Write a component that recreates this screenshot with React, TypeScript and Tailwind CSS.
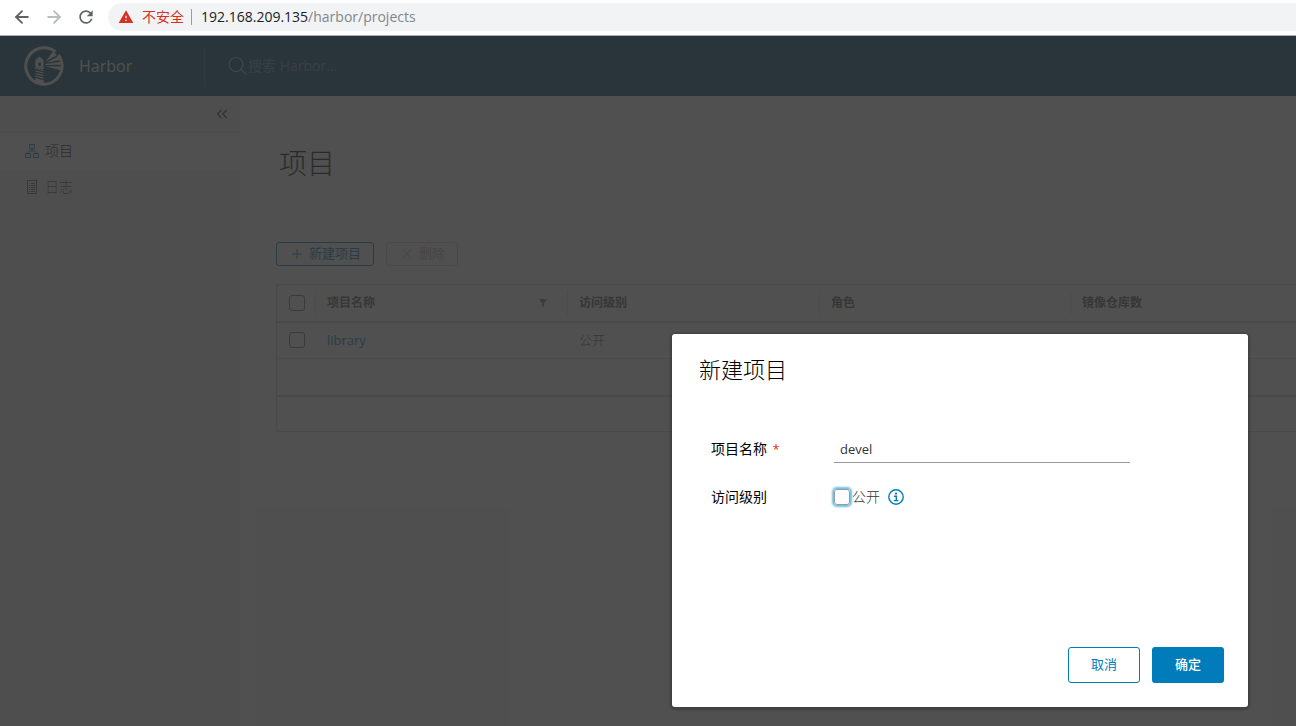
import type { ReactNode } from "react";
import { ArrowLeft, ArrowRight, ChevronsLeft, Plus, X } from "lucide-react";
import { MdRefresh, MdWarning } from "react-icons/md";

const columns = ["访问级别", "角色", "镜像仓库数"];

function BrowserBar() {
  return (
    <div className="flex h-9 shrink-0 items-center border-b border-[#a9acb0] bg-white pb-px font-['Open_Sans','Noto_Sans_CJK_SC',sans-serif]">
      <div className="flex w-[108px] shrink-0 items-center gap-3 pl-3">
        <button type="button" aria-label="后退">
          <ArrowLeft className="size-5 text-[#5f6368]" strokeWidth={2.25} />
        </button>
        <button type="button" aria-label="前进">
          <ArrowRight className="size-5 text-[#babcbe]" strokeWidth={2.25} />
        </button>
        <button type="button" aria-label="刷新">
          <MdRefresh className="size-5 text-[#5f6368]" />
        </button>
      </div>
      <div className="flex h-7 grow items-center rounded-l-full bg-[#f1f3f4] pl-[10px] text-sm">
        <MdWarning className="size-4 text-[#d93025]" />
        <span className="ml-2 text-[#d93025]">不安全</span>
        <span className="mr-[9px] ml-[7px] h-4 w-px bg-[#9a9da1]" />
        <span className="text-[#202124]">192.168.209.135</span>
        <span className="text-[#80868b]">/harbor/projects</span>
      </div>
    </div>
  );
}

function HarborLogo() {
  return (
    <svg viewBox="0 0 40 40" className="size-10 text-white" fill="currentColor" aria-hidden="true">
      <path
        fill="none"
        stroke="currentColor"
        strokeWidth="3"
        d="M18 38.200A18.300 18.300 0 1 1 31.500 5.700M34.500 9A18.300 18.300 0 0 1 18 38.200"
      />
      <path d="M15.500 10.500l4 3.500h-8z" />
      <path fillRule="evenodd" d="M11.500 14h8v7.500h-8zM14.300 16.500v3.500h2.600v-3.500z" />
      <path d="M11 21.500h9v1.300h-9z" />
      <path d="M12 23.500h7.200l.1 1.500zM11.900 24.500l7.500 2v1.200l-7.600-2zM11.700 27l7.800 2v1.200l-7.900-2zM11.500 29.500l8.100 2.100v1.200l-8.200-2.100zM11.300 32l8.400 2.200v5l-8.600-2z" />
      <path d="M21.500 15.500L29 5.500l4 3.500zM21.500 16.900L34 10.500l2 3.500zM21.500 18.100L37 15.800v3l-15.500.3zM21.500 20.300l16 .3-.8 3.600z" />
    </svg>
  );
}

function SearchIcon() {
  return (
    <svg viewBox="0 0 20 20" className="size-5 text-white/60" fill="none" stroke="currentColor" strokeWidth="1.2" aria-hidden="true">
      <circle cx="8" cy="8.500" r="7" />
      <path d="M13 13.500l5.500 5" />
    </svg>
  );
}

function ProjectsIcon() {
  return (
    <svg viewBox="0 0 14 14" className="size-[14px] text-[#0079b8]" fill="none" stroke="currentColor" aria-hidden="true">
      <path d="M4.500.5h5v4h-5zM.5 9.500h5v4h-5zM8.500 9.500h5v4h-5zM7 4.500V7M3 9.500V8l1.500-1h5L11 8v1.500" />
    </svg>
  );
}

function LogsIcon() {
  return (
    <svg viewBox="0 0 14 14" className="size-[14px] text-[#565656]" fill="none" stroke="currentColor" aria-hidden="true">
      <path d="M2.500.5h9v13h-9zM4 3.500h1M6 3.500h4M4 5.500h1M6 5.500h4M4 7.500h1M6 7.500h4M4 9.500h1M6 9.500h4M4 11.500h1M6 11.500h4" />
    </svg>
  );
}

function InfoIcon() {
  return (
    <svg viewBox="0 0 16 16" className="size-4 text-[#007cbb]" fill="none" stroke="currentColor" aria-hidden="true">
      <circle cx="8" cy="8" r="7.200" strokeWidth="1.400" />
      <circle cx="8" cy="4.600" r="1.100" fill="currentColor" stroke="none" />
      <path d="M6 7.300H8.300V11.500M5.800 11.600h4.600" strokeWidth="1.400" />
    </svg>
  );
}

function Checkbox({ label }: { label: string }) {
  return (
    <input
      type="checkbox"
      aria-label={label}
      className="block size-4 appearance-none rounded-[3px] border border-[#737373]"
    />
  );
}

function HeaderCell({ children, filter }: { children: ReactNode; filter?: boolean }) {
  return (
    <th scope="col" className="p-0">
      <div className="flex h-6 items-center justify-between border-l border-[#e4e4e4] pr-5 pl-[11px] text-left text-xs font-bold text-[#565656]">
        {children}
        {filter && (
          <svg viewBox="0 0 8 8" className="size-2 text-[#747474]" fill="currentColor" aria-hidden="true">
            <path d="M0 0h8L5 4v4L3 7V4z" />
          </svg>
        )}
      </div>
    </th>
  );
}

function Sidebar() {
  return (
    <nav className="w-60 shrink-0 bg-[#eeeeee] text-sm font-light text-[#565656]">
      <div className="flex h-9 items-center justify-end pr-[9px]">
        <button type="button" aria-label="收起">
          <ChevronsLeft className="size-[18px] text-[#333333]" strokeWidth={1.5} />
        </button>
      </div>
      <a href="#projects" className="flex h-[37px] items-center gap-1.5 border-t border-[#dddddd] bg-white pl-[25px] text-black">
        <ProjectsIcon />
        项目
      </a>
      <a href="#logs" className="flex h-9 items-center gap-1.5 pl-[25px]">
        <LogsIcon />
        日志
      </a>
    </nav>
  );
}

function ProjectTable() {
  return (
    <div className="mt-[18px] rounded-l-[3px] border border-r-0 border-[#cccccc]">
      <table className="w-full table-fixed border-collapse">
        <colgroup>
          <col className="w-[38px]" />
          <col className="w-[252px]" />
          <col className="w-[252px]" />
          <col className="w-[251px]" />
          <col />
        </colgroup>
        <thead>
          <tr className="h-[37px] border-b-2 border-[#cccccc]">
            <th className="py-0 pr-0 pl-3">
              <Checkbox label="全选" />
            </th>
            <HeaderCell filter>项目名称</HeaderCell>
            {columns.map((name) => (
              <HeaderCell key={name}>{name}</HeaderCell>
            ))}
          </tr>
        </thead>
        <tbody className="text-[13px] text-[#565656]">
          <tr className="h-9 border-b border-[#dddddd]">
            <td className="py-0 pr-0 pl-3">
              <Checkbox label="library" />
            </td>
            <td className="py-0 pr-0 pl-3">
              <a href="#library" className="text-[#007cbb]">library</a>
            </td>
            <td className="py-0 pr-0 pl-3 font-light">公开</td>
            <td />
            <td />
          </tr>
        </tbody>
      </table>
      <div className="h-9" />
      <div className="h-9 border-t-2 border-[#cccccc]" />
    </div>
  );
}

function NewProjectDialog() {
  return (
    <form
      role="dialog"
      aria-labelledby="dialog-title"
      className="flex h-[373px] w-xl flex-col rounded-[3px] bg-white px-6 pt-[23px] pb-6 text-black shadow-[0_1px_2px_2px_rgba(0,0,0,0.2)]"
    >
      <h2 id="dialog-title" className="pl-[3px] text-[22px] leading-6 font-light">新建项目</h2>
      <div className="mt-[54px] flex h-7 items-center pl-[15px] text-sm">
        <label htmlFor="name" className="w-[123px]">
          项目名称 <span className="ml-0.5 text-xs text-[#e62700]">*</span>
        </label>
        <input
          id="name"
          defaultValue="devel"
          className="h-7 w-[296px] border-b border-[#9a9a9a] px-1.5 text-[13px] text-[#333333] outline-none"
        />
      </div>
      <div className="mt-5 flex h-7 items-center pl-[15px] text-sm">
        <span className="w-[123px]">访问级别</span>
        <input
          id="public"
          type="checkbox"
          className="size-4 appearance-none rounded-[3px] border border-[#9a9a9a] shadow-[0_0_2px_2px_#6bc1e3]"
        />
        <label htmlFor="public" className="ml-0.5 font-light text-[#333333]">公开</label>
        <span className="ml-2">
          <InfoIcon />
        </span>
      </div>
      <div className="mt-auto flex justify-end gap-3 text-[13px]">
        <button type="button" className="h-9 w-[72px] rounded-[3px] border border-[#007cbb] text-[#007cbb]">
          取消
        </button>
        <button type="submit" className="h-9 w-[72px] rounded-[3px] bg-[#007cbb] font-medium text-white">
          确定
        </button>
      </div>
    </form>
  );
}

export default function App() {
  return (
    <div className="flex min-h-screen flex-col overflow-hidden">
      <BrowserBar />
      <div className="relative flex grow flex-col bg-[#fafafa] font-['Open_Sans','Noto_Sans_CJK_SC',sans-serif]">
        <header className="flex h-[60px] shrink-0 items-center bg-[#004a70] pl-6">
          <a href="#home" className="flex w-[180px] items-center gap-[15px] text-base text-white">
            <HarborLogo />
            Harbor
          </a>
          <div className="flex h-10 items-center border-l border-white/15 pl-[23px]">
            <SearchIcon />
            <input
              type="search"
              aria-label="搜索"
              placeholder="搜索 Harbor..."
              className="w-48 bg-transparent text-sm text-white outline-none placeholder:text-white/40"
            />
          </div>
        </header>

        <div className="flex grow">
          <Sidebar />
          <main className="min-w-0 grow pl-9">
            <h1 className="mt-[47px] pl-[3px] text-[28px] leading-10 font-light text-black">项目</h1>
            <div className="mt-[59px] flex gap-3 text-[13px]">
              <button type="button" className="flex h-6 w-[98px] items-center justify-center gap-1 rounded-[3px] border border-[#007cbb] text-[#007cbb]">
                <Plus className="size-4" strokeWidth={1.5} />
                新建项目
              </button>
              <button type="button" disabled className="flex h-6 w-[72px] items-center justify-center gap-1 rounded-[3px] border border-[#cccccc] text-[#bbbbbb]">
                <X className="size-4" strokeWidth={1.5} />
                删除
              </button>
            </div>
            <ProjectTable />
          </main>
        </div>

        {/* Modal backdrop */}
        <div className="absolute inset-0 flex items-end justify-end bg-[#313131]/85 pr-12 pb-[19px]">
          <NewProjectDialog />
        </div>
      </div>
    </div>
  );
}
